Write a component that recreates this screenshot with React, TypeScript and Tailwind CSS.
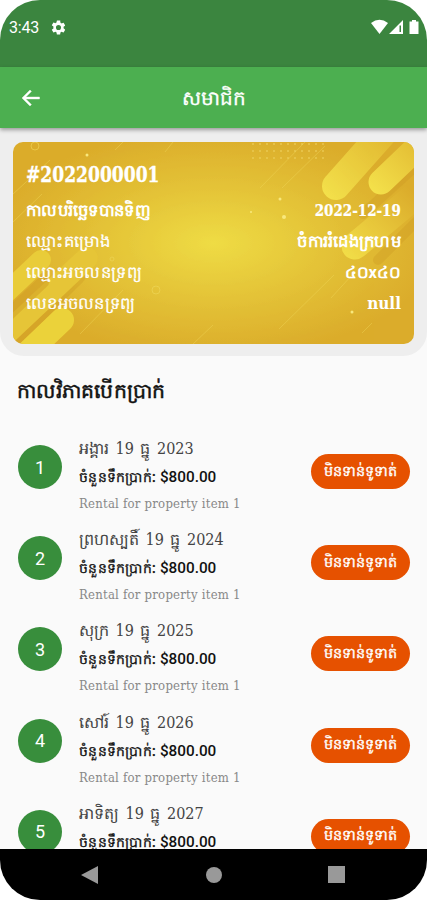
interface Payment {
  day: string;
  year: number;
}

const payments: Payment[] = [
  { day: 'អង្គារ', year: 2023 },
  { day: 'ព្រហស្បតិ៍', year: 2024 },
  { day: 'សុក្រ', year: 2025 },
  { day: 'សៅរ៍', year: 2026 },
  { day: 'អាទិត្យ', year: 2027 },
];

function StatusBar() {
  return (
    <div className="flex h-[67px] shrink-0 justify-between bg-[#3b853f] pl-[9px] pr-[7px] pt-[18px] text-white">
      <div className="flex h-[20px] items-center">
        <span className="w-[41px] text-[16px] tracking-[-0.2px]">3:43</span>
        <svg className="size-[17px] -translate-y-px" viewBox="0 0 24 24" fill="currentColor">
          <path d="M19.14 12.94c.04-.3.06-.61.06-.94s-.02-.64-.07-.94l2.03-1.58a.49.49 0 0 0 .12-.61l-1.92-3.32a.49.49 0 0 0-.59-.22l-2.39.96a7 7 0 0 0-1.62-.94l-.36-2.54A.48.48 0 0 0 13.92 2h-3.84a.48.48 0 0 0-.48.41l-.36 2.54c-.59.24-1.13.57-1.62.94l-2.39-.96a.48.48 0 0 0-.59.22L2.72 8.47a.48.48 0 0 0 .12.61l2.03 1.58a7.5 7.5 0 0 0 0 2.68l-2.03 1.58a.49.49 0 0 0-.12.61l1.92 3.32c.12.22.37.29.59.22l2.39-.96c.5.38 1.03.7 1.62.94l.36 2.54c.05.24.24.41.48.41h3.84c.24 0 .44-.17.47-.41l.36-2.54a7 7 0 0 0 1.62-.94l2.39.96c.22.08.47 0 .59-.22l1.92-3.32a.48.48 0 0 0-.12-.61zM12 15.6a3.6 3.6 0 1 1 0-7.2 3.6 3.6 0 0 1 0 7.2z" />
        </svg>
      </div>
      <svg className="h-[20px] w-[50px]" viewBox="0 0 50 20" fill="currentColor">
        <path d="M1 5Q9.500-1.500 18 5L9.500 16z" />
        <path fillRule="evenodd" d="M19 16 33 2v14zM29.500 7.500v6.500h1.500V7.500z" />
        <path d="M42 2h4v1.500h2.500V16h-9V3.500H42z" />
      </svg>
    </div>
  );
}

function AppBar() {
  return (
    <div className="z-10 grid h-[61px] shrink-0 grid-cols-[61px_1fr_61px] items-center bg-[#4caf50] text-white shadow-[0_2px_4px_rgba(0,0,0,0.35)]">
      <svg className="ml-[19px] size-[24px]" viewBox="0 0 24 24" fill="currentColor" stroke="currentColor" strokeWidth="0.4">
        <path d="M20.500 11H6.830l5.580-5.590L11 4l-8 8 8 8 1.410-1.410L6.830 13H20.500z" />
      </svg>
      <h1 className="text-center text-[20px] [-webkit-text-stroke:0.3px_white]">សមាជិក</h1>
    </div>
  );
}

function CardPattern() {
  return (
    <svg className="absolute inset-0 size-full" viewBox="0 0 401 202" preserveAspectRatio="none">
      <defs>
        <radialGradient id="gold" cx="50%" cy="50%" r="56%">
          <stop offset="0" stopColor="#efdc45" />
          <stop offset="0.5" stopColor="#e4c338" />
          <stop offset="1" stopColor="#dbac2b" />
        </radialGradient>
        <linearGradient id="barRight" gradientUnits="userSpaceOnUse" x1="320" y1="60" x2="390" y2="-10">
          <stop offset="0" stopColor="#f3e04b" />
          <stop offset="1" stopColor="#dfb32d" />
        </linearGradient>
        <linearGradient id="barEdge" gradientUnits="userSpaceOnUse" x1="360" y1="50" x2="415" y2="-5">
          <stop offset="0" stopColor="#f4e14b" />
          <stop offset="1" stopColor="#e0b62f" />
        </linearGradient>
        <linearGradient id="barLow" gradientUnits="userSpaceOnUse" x1="332" y1="118" x2="400" y2="50">
          <stop offset="0" stopColor="#f3df49" />
          <stop offset="1" stopColor="#dbac2b" />
        </linearGradient>
        <pattern id="dots" width="7" height="7" patternUnits="userSpaceOnUse">
          <circle cx="2" cy="2" r="1" fill="#f3d967" opacity="0.6" />
        </pattern>
      </defs>
      <rect width="401" height="202" fill="url(#gold)" />
      <rect x="237" y="0" width="75" height="20" fill="url(#dots)" />
      <g fill="none" strokeLinecap="round">
        <path d="M405 22 350 72M405 78 365 118M358-4 330 28" stroke="#c99620" strokeWidth="10" opacity="0.3" />
        <path d="M378-18 323 44" stroke="url(#barRight)" strokeWidth="28" />
        <path d="M415-5 368 40" stroke="url(#barEdge)" strokeWidth="25" />
        <path d="M415 43 342 104" stroke="url(#barLow)" strokeWidth="27" />
        <path d="M61 132-10 202" stroke="#c99620" strokeWidth="24" opacity="0.3" />
        <path d="M74 116-10 195" stroke="#e6c537" strokeWidth="22" />
        <path d="M30 140-10 178" stroke="#cf9e25" strokeWidth="12" opacity="0.5" />
        <path d="M28 118-10 154" stroke="#e9cc3a" strokeWidth="20" />
        <path d="M49 178 5 220" stroke="#ecd33b" strokeWidth="24" />
      </g>
      <g stroke="#f1d95b" strokeWidth="1" opacity="0.4">
        <path d="m0 52 37-34M0 80l29-28M102 8l8-8M152 10l8-10M247 46 292 0M269 46 312 4M67 192l43-44M180 202l20-19M266 187l55-54M318 156l21-23M349 191l10-10" />
      </g>
      <g fill="none" stroke="#f1d95b" opacity="0.6">
        <circle cx="22" cy="4" r="4" />
        <circle cx="143" cy="148" r="4" />
        <circle cx="99" cy="117" r="2" />
      </g>
      <g fill="#f8e87d">
        <circle cx="74" cy="13" r="1.500" />
        <circle cx="267" cy="57" r="1.500" />
        <circle cx="271" cy="75" r="2" />
        <circle cx="238" cy="70" r="1" />
        <circle cx="339" cy="170" r="1.500" />
      </g>
    </svg>
  );
}

function MemberCard() {
  return (
    <section className="h-[228px] shrink-0 rounded-b-[24px] bg-[#eeeeee] px-[13px] pt-[14px]">
      <div className="relative h-[202px] overflow-hidden rounded-[10px]">
        <CardPattern />
        <div className="relative px-[13px] pt-[16px] text-white">
          <div className="h-[37px] w-fit origin-left scale-x-[0.865] whitespace-nowrap font-['DejaVu_Serif_Condensed','DejaVu_Serif'] text-[22px] font-bold leading-[32px] [-webkit-text-stroke:0.3px_white]">
            #2022000001
          </div>
          <dl className="text-[16.5px] leading-[31px]">
            <div className="flex h-[31px] justify-between">
              <dt className="font-bold tracking-[0.3px]">កាលបរិច្ឆេទបានទិញ</dt>
              <dd className="origin-right scale-x-[0.88] font-['DejaVu_Serif_Condensed','DejaVu_Serif'] text-[17px] font-bold [-webkit-text-stroke:0.2px_white]">
                2022-12-19
              </dd>
            </div>
            <div className="flex h-[31px] justify-between">
              <dt className="tracking-[0.5px] [-webkit-text-stroke:0.2px_white]">ឈ្មោះគម្រោង</dt>
              <dd className="font-bold tracking-[0.3px]">ចំការរំដេងក្រហម</dd>
            </div>
            <div className="flex h-[31px] justify-between">
              <dt className="tracking-[0.45px] [-webkit-text-stroke:0.2px_white]">ឈ្មោះអចលនទ្រព្យ</dt>
              <dd className="font-bold">៤០x៤០</dd>
            </div>
            <div className="flex h-[31px] justify-between">
              <dt className="tracking-[0.3px] [-webkit-text-stroke:0.2px_white]">លេខអចលនទ្រព្យ</dt>
              <dd className="font-['DejaVu_Serif_Condensed','DejaVu_Serif'] text-[17px] font-bold">null</dd>
            </div>
          </dl>
        </div>
      </div>
    </section>
  );
}

function PaymentRow({ payment, index }: { payment: Payment; index: number }) {
  return (
    <li className="flex h-[91.200px] items-start pl-[18px] pr-[17px]">
      <div className="mt-[10px] flex size-[44px] shrink-0 items-center justify-center rounded-full bg-[#388e3c] text-[18px] text-white">
        {index}
      </div>
      <div className="-mt-px ml-[17px] flex-1 whitespace-nowrap">
        <div className="h-[29px] font-['DejaVu_Serif_Condensed','DejaVu_Serif'] text-[16px] leading-[29px] text-[#444] [word-spacing:2px]">
          {payment.day} 19 ធ្នូ {payment.year}
        </div>
        <div className="h-[30px] text-[15.300px] font-medium leading-[29px] text-[#111]">
          <span className="text-[14px] tracking-[0.3px] [-webkit-text-stroke:0.3px_#111]">ចំនួនទឹកប្រាក់:</span> $800.00
        </div>
        <div className="h-[22px] font-['DejaVu_Serif_Condensed','DejaVu_Serif'] text-[13px] leading-[22px] tracking-[0.230px] text-[#888]">
          Rental for property item 1
        </div>
      </div>
      <div className="mt-[19px] flex h-[35px] w-[99px] shrink-0 items-center justify-center whitespace-nowrap rounded-full bg-[#e65100] text-[14.500px] text-white [-webkit-text-stroke:0.3px_white]">
        មិនទាន់ទូទាត់
      </div>
    </li>
  );
}

function NavBar() {
  return (
    <div className="grid h-[51px] shrink-0 grid-cols-3 place-items-center bg-black">
      <svg className="ml-[37px] size-[18px]" viewBox="0 0 18 18" fill="#999">
        <path d="M17 0v18L0 9z" />
      </svg>
      <div className="ml-px size-[16px] rounded-full bg-[#999]" />
      <div className="mr-[39px] size-[17px] bg-[#999]" />
    </div>
  );
}

export default function App() {
  return (
    <div className="h-[900px] w-[427px] bg-white">
      <div className="flex h-full flex-col overflow-hidden rounded-[40px] bg-[#fafafa] font-[Roboto,'Noto_Sans',sans-serif]">
        <StatusBar />
        <AppBar />
        <MemberCard />
        <main className="min-h-0 flex-1 overflow-hidden">
          <h2 className="h-[79px] pl-[17px] pt-[18px] text-[20.400px] font-medium leading-[34px] tracking-[0.250px] text-[#111] [-webkit-text-stroke:0.500px_#111]">
            កាលវិភាគបើកប្រាក់
          </h2>
          <ul>
            {payments.map((payment, i) => (
              <PaymentRow key={payment.year} payment={payment} index={i + 1} />
            ))}
          </ul>
        </main>
        <NavBar />
      </div>
    </div>
  );
}
